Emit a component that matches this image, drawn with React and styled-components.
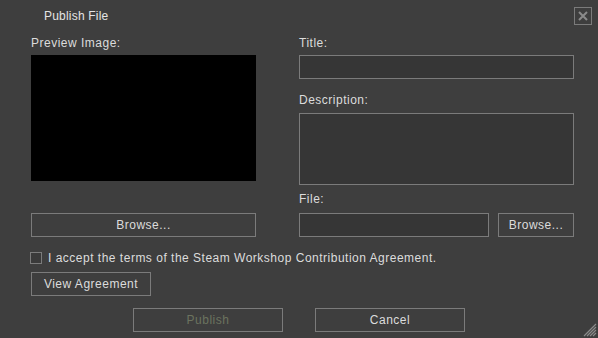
import React from "react";
import styled, { createGlobalStyle } from "styled-components";

const Global = createGlobalStyle`
  html, body {
    margin: 0;
    padding: 0;
    background: #3e3e3e;
  }
  * { box-sizing: border-box; }
`;

const Dialog = styled.div`
  position: relative;
  width: 598px;
  height: 338px;
  background: #3e3e3e;
  color: #dcdcdc;
  font-family: "Liberation Sans", Arial, sans-serif;
  font-size: 12px;
  letter-spacing: 0.5px;
  overflow: hidden;
`;

const TitleBar = styled.div`
  display: flex;
  justify-content: space-between;
  align-items: flex-start;
  height: 35px;
  padding: 7px 6px 0 44px;
`;

const TitleText = styled.div`
  font-size: 12px;
  letter-spacing: 0.2px;
  line-height: 16px;
  color: #e4e4e4;
  padding-top: 1px;
`;

const CloseBox = styled.div`
  width: 18px;
  height: 18px;
  border: 1px solid #7b7b7b;
  display: flex;
  align-items: center;
  justify-content: center;
`;

const Columns = styled.div`
  display: flex;
  gap: 43px;
  padding-left: 31px;
`;

const Column = styled.div`
  display: flex;
  flex-direction: column;
  width: ${(p) => p.w}px;
`;

const Label = styled.div`
  line-height: 16px;
  height: 16px;
  margin-bottom: ${(p) => p.below || 4}px;
  margin-top: ${(p) => p.top || 0}px;
  color: #dcdcdc;
`;

const Preview = styled.div`
  height: 126px;
  background: #000;
`;

const Field = styled.div`
  height: ${(p) => p.h || 24}px;
  flex: ${(p) => (p.grow ? 1 : "none")};
  background: #363636;
  border: 1px solid #7b7b7b;
`;

const Button = styled.div`
  height: 24px;
  width: ${(p) => (p.w ? p.w + "px" : "auto")};
  margin-top: ${(p) => p.top || 0}px;
  border: 1px solid #7b7b7b;
  display: flex;
  align-items: center;
  justify-content: center;
  color: ${(p) => (p.disabled ? "#6b735f" : "#dcdcdc")};
  line-height: 16px;
  padding-bottom: 1px;
`;

const FileRow = styled.div`
  display: flex;
  gap: 9px;
`;

const AcceptRow = styled.label`
  display: flex;
  align-items: center;
  gap: 6px;
  margin: 13px 0 0 30px;
  height: 16px;
`;

const Check = styled.span`
  width: 12px;
  height: 12px;
  border: 1px solid #7b7b7b;
  background: #3a3a3a;
`;

const Actions = styled.div`
  display: flex;
  justify-content: center;
  gap: 32px;
  margin-top: 12px;
`;

const Grip = styled.svg`
  position: absolute;
  right: 1px;
  bottom: 1px;
`;

export default function App() {
  return (
    <Dialog>
      <Global />
      <TitleBar>
        <TitleText>Publish File</TitleText>
        <CloseBox>
          <svg width="12" height="12" viewBox="0 0 12 12">
            <path d="M2 2 L10 10 M10 2 L2 10" stroke="#8a8a8a" strokeWidth="2" />
          </svg>
        </CloseBox>
      </TitleBar>
      <Columns>
        <Column w={225}>
          <Label>Preview Image:</Label>
          <Preview />
          <Button top={32}>Browse...</Button>
        </Column>
        <Column w={275}>
          <Label>Title:</Label>
          <Field />
          <Label top={13} below={5}>Description:</Label>
          <Field h={72} />
          <Label top={6} below={6}>File:</Label>
          <FileRow>
            <Field grow />
            <Button w={76}>Browse...</Button>
          </FileRow>
        </Column>
      </Columns>
      <AcceptRow>
        <Check />
        I accept the terms of the Steam Workshop Contribution Agreement.
      </AcceptRow>
      <Columns>
        <Button w={120} top={6}>View Agreement</Button>
      </Columns>
      <Actions>
        <Button w={150} disabled>Publish</Button>
        <Button w={150}>Cancel</Button>
      </Actions>
      <Grip width="14" height="14" viewBox="0 0 14 14">
        <path d="M13 1 L1 13 M13 4 L4 13 M13 7 L7 13 M13 10 L10 13" stroke="#8a8a8a" strokeWidth="1.2" />
      </Grip>
    </Dialog>
  );
}
